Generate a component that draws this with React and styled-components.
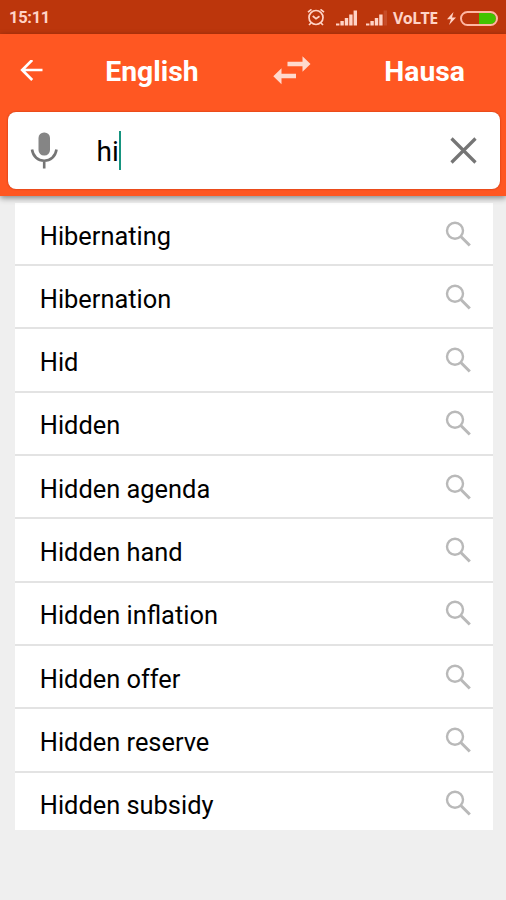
import React from 'react';
import styled, {createGlobalStyle} from "styled-components";

const GlobalStyle = createGlobalStyle`
    * {
        box-sizing: border-box;
    }

    body {
        margin: 0;
        background-color: #efefef;
        font-family: Roboto, "Liberation Sans", sans-serif;
    }
`;

const AppWrapper = styled.div`
    width: 506px;
    height: 900px;
    overflow: hidden;
    background-color: #efefef;
`;

const StatusBar = styled.div`
    display: flex;
    height: 34px;
    padding: 2px 8px 0 9px;
    align-items: center;
    background-color: #bc360c;
    color: #ffd3c6;
`;

const Clock = styled.span`
    flex: 1;
    font-size: 16.5px;
    line-height: 20px;
    font-weight: 700;
    letter-spacing: -0.3px;
`;

const Network = styled.span`
    width: 46px;
    margin: 0 8px 0 5px;
    font-family: "Noto Sans", sans-serif;
    font-size: 16px;
    line-height: 20px;
    font-weight: 700;
    letter-spacing: -0.4px;
    white-space: nowrap;
`;

const Icon = styled.svg`
    display: block;
    flex: none;
    margin-right: ${({$gap}) => $gap || 0}px;
`;

const Header = styled.header`
    position: relative;
    height: 162px;
    padding: 0 6.5px 0 7.5px;
    background-color: #ff5722;
    box-shadow: 0 2px 6px rgba(0, 0, 0, .45);
`;

const Languages = styled.div`
    display: flex;
    height: 77.5px;
    padding: 0 28px 4px 12px;
    align-items: center;
    color: #fff;
`;

const Language = styled.span`
    width: ${({$width}) => $width}px;
    padding-top: 2px;
    font-size: 28.3px;
    line-height: 34px;
    font-weight: 700;
    white-space: nowrap;
`;

const SearchBox = styled.div`
    display: flex;
    height: 77.5px;
    padding: 0 23px 0 22px;
    align-items: center;
    border-radius: 8px;
    background-color: #fff;
    box-shadow: 0 0 2px rgba(150, 30, 0, .7);
`;

const Query = styled.div`
    display: flex;
    flex: 1;
    align-items: center;
    font-size: 28px;
    line-height: 38px;
    color: #000;
`;

const Typed = styled.span`
    padding-top: 4px;
`;

const Caret = styled.span`
    width: 2px;
    height: 39px;
    background-color: #16947f;
`;

const Suggestions = styled.ul`
    list-style: none;
    margin: 6.9px 13px 0 14.5px;
    padding: 0;
`;

const Suggestion = styled.li`
    display: flex;
    height: 63.3px;
    padding: 0 21.7px 0 25.3px;
    align-items: center;
    justify-content: space-between;
    border-bottom: 2px solid #e3e3e3;
    background-color: #fff;
    font-size: 25.4px;
    line-height: 30px;
    color: #000;

    &:last-child {
        height: 57.4px;
        padding-top: 4px;
        border-bottom: 0;
    }
`;

const Word = styled.span`
    padding-top: 4px;
`;

const AlarmIcon = () => (
    <Icon $gap={11} width="18" height="19" viewBox="0 0 18 19" fill="none" stroke="currentColor" strokeWidth="1.7">
        <circle cx="9" cy="8.5" r="7"/>
        <path d="M1 3.2 4.5.4M17 3.2 13.5.4M5.7 7 9 9.6l3.5-2.4M4 14l-2 2M14 14l2 2"/>
    </Icon>
);

const SignalIcon = ({bars, gap}) => (
    <Icon $gap={gap} width="22" height="16" viewBox="0 0 22 16" fill="currentColor">
        {[2, 4.5, 7.5, 11, 15].map((height, i) => (
            <rect key={i} x={i * 4.4} y={15.5 - height} width="3.4" height={height}
                  opacity={i < bars ? 1 : .15}/>
        ))}
    </Icon>
);

const BatteryIcon = () => (
    <>
        <Icon $gap={4} width="9" height="13" viewBox="0 0 9 13" fill="currentColor">
            <path d="M6.5 0 0 7.2h4L2 13l7-7.6H5z"/>
        </Icon>
        <Icon width="38" height="15" viewBox="0 0 38 15">
            <path d="M19 2h11.5a5.5 5.5 0 0 1 0 11H19z" fill="#43c300"/>
            <rect x="1" y="1" width="36" height="13" rx="6.5" fill="none" stroke="#ffb7a3" strokeWidth="2"/>
        </Icon>
    </>
);

const BackIcon = () => (
    <Icon $gap={62.8} width="23" height="22" viewBox="0 0 23 22" fill="none" stroke="#fff" strokeWidth="2.7">
        <path d="M12.2 0 2.2 10l10 10M2.5 10h20"/>
    </Icon>
);

const SwapIcon = () => (
    <Icon $gap={73.5} width="38" height="29" viewBox="0 0 38 29" fill="#ffd9cd">
        <path d="M14.5 5.7h15V.3l8 7.7-8 7.7v-5.4h-15zM23 17.700H8.500v-5.400L.3 20.200l8.200 8.100v-6H23z"/>
    </Icon>
);

const MicIcon = () => (
    <Icon $gap={39} width="28" height="38" viewBox="0 0 28 38">
        <rect x="8.5" y="1.5" width="11.5" height="23" rx="5.5" fill="#858585"/>
        <path d="M2 18.5c1 7 6 11.2 12.2 11.2s11.3-4.2 12.3-11.2M14.2 29.5v8" fill="none" stroke="#757575" strokeWidth="2.6"/>
    </Icon>
);

const ClearIcon = () => (
    <Icon width="27" height="27" viewBox="0 0 27 27" fill="none" stroke="#757575" strokeWidth="3.2">
        <path d="m1.5 1.5 24 24M25.5 1.5l-24 24"/>
    </Icon>
);

const SearchIcon = () => (
    <Icon width="26" height="26" viewBox="0 0 26 26" fill="none" stroke="#b9b9b9">
        <circle cx="10" cy="9.7" r="8" strokeWidth="2.4"/>
        <path d="m15.8 15.5 9 9" strokeWidth="3"/>
    </Icon>
);

const words = [
    'Hibernating',
    'Hibernation',
    'Hid',
    'Hidden',
    'Hidden agenda',
    'Hidden hand',
    'Hidden inflation',
    'Hidden offer',
    'Hidden reserve',
    'Hidden subsidy',
];

const App = () => (
    <>
        <GlobalStyle/>
        <AppWrapper>
            <StatusBar>
                <Clock>15:11</Clock>
                <AlarmIcon/>
                <SignalIcon bars={5} gap={8}/>
                <SignalIcon bars={4} gap={0}/>
                <Network>VoLTE</Network>
                <BatteryIcon/>
            </StatusBar>
            <Header>
                <Languages>
                    <BackIcon/>
                    <Language $width={167.5}>English</Language>
                    <SwapIcon/>
                    <Language $width={80}>Hausa</Language>
                </Languages>
                <SearchBox>
                    <MicIcon/>
                    <Query>
                        <Typed>hi</Typed>
                        <Caret/>
                    </Query>
                    <ClearIcon/>
                </SearchBox>
            </Header>
            <Suggestions>
                {words.map((word) => (
                    <Suggestion key={word}>
                        <Word>{word}</Word>
                        <SearchIcon/>
                    </Suggestion>
                ))}
            </Suggestions>
        </AppWrapper>
    </>
);

export default App;
